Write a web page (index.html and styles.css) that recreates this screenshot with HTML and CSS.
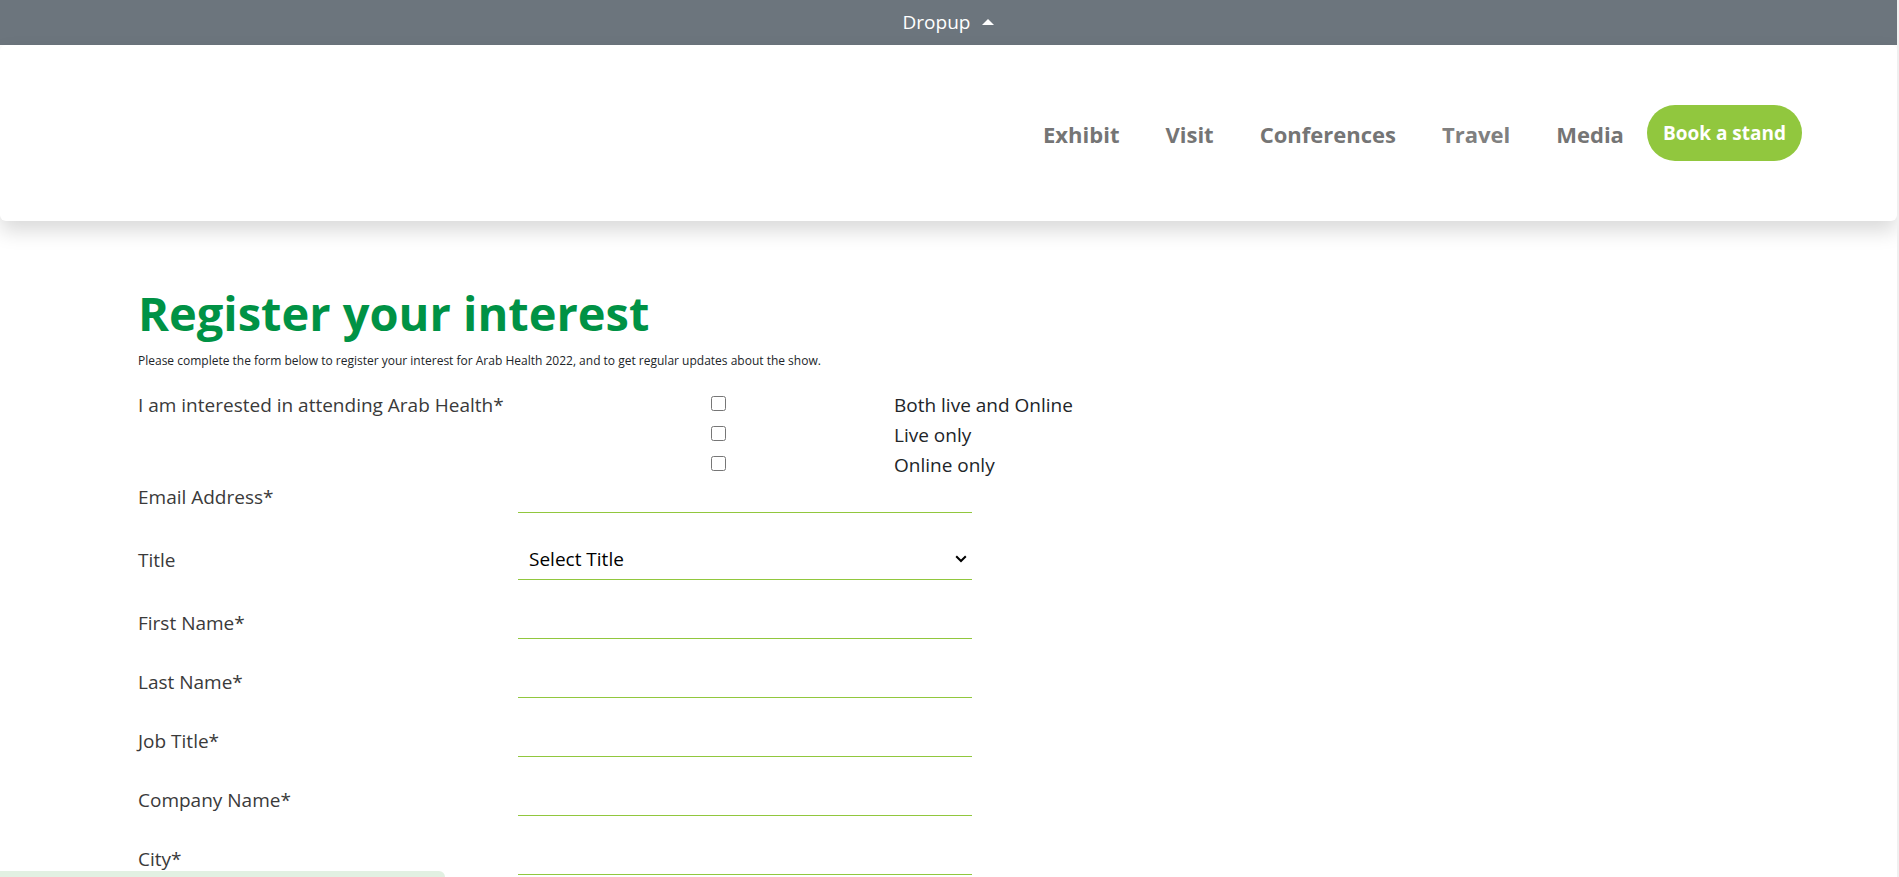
FILE: index.html
```html
<!DOCTYPE html>
<html lang="en">
<head>
<meta charset="utf-8">
<title>Register your interest</title>
<link rel="stylesheet" href="styles.css">
</head>
<body>
<div class="page">
  <div class="topbar">
    <button class="dropup" type="button">Dropup <span class="caret"></span></button>
  </div>
  <header class="header">
    <nav class="nav">
      <a class="nav-link" href="#">Exhibit</a>
      <a class="nav-link" href="#">Visit</a>
      <a class="nav-link" href="#">Conferences</a>
      <a class="nav-link nav-link-light" href="#">Travel</a>
      <a class="nav-link" href="#">Media</a>
    </nav>
    <button class="book" type="button">Book a stand</button>
  </header>
  <main class="main">
    <h1 class="title">Register your interest</h1>
    <p class="intro">Please complete the form below to register your interest for Arab Health 2022, and to get regular updates about the show.</p>
    <form class="form">
      <div class="row interest" role="group" aria-labelledby="interest-label">
        <span class="label" id="interest-label">I am interested in attending Arab Health*</span>
        <div class="options">
          <div class="option"><span class="check"><input class="box" type="checkbox" id="both"></span><label for="both">Both live and Online</label></div>
          <div class="option"><span class="check"><input class="box" type="checkbox" id="live"></span><label for="live">Live only</label></div>
          <div class="option"><span class="check"><input class="box" type="checkbox" id="online"></span><label for="online">Online only</label></div>
        </div>
      </div>
      <div class="fields">
        <div class="row"><label class="label" for="email">Email Address*</label><input class="field" id="email" type="email"></div>
        <div class="row">
          <label class="label" for="honorific">Title</label>
          <div class="select-wrap">
            <select class="field select" id="honorific"><option>Select Title</option></select>
            <svg class="chevron" width="12" height="8" viewBox="0 0 12 8" aria-hidden="true"><path d="M1.2 1.2 6 6l4.800-4.800" fill="none" stroke="#000" stroke-width="2"/></svg>
          </div>
        </div>
        <div class="row"><label class="label" for="first">First Name*</label><input class="field" id="first" type="text"></div>
        <div class="row"><label class="label" for="last">Last Name*</label><input class="field" id="last" type="text"></div>
        <div class="row"><label class="label" for="job">Job Title*</label><input class="field" id="job" type="text"></div>
        <div class="row"><label class="label" for="company">Company Name*</label><input class="field" id="company" type="text"></div>
        <div class="row"><label class="label" for="city">City*</label><input class="field" id="city" type="text"></div>
      </div>
    </form>
  </main>
</div>
<div class="toast"></div>
</body>
</html>
```
FILE: styles.css
```css
* {
  box-sizing: border-box;
}

body {
  margin: 0;
  height: 100vh;
  overflow: hidden;
  background: #fff;
  border-right: 2px solid #f0f0f0;
  color: #212529;
  font-family: "Segoe UI", "Open Sans", "Noto Sans", sans-serif;
  font-size: 19px;
  line-height: 30px;
}

button,
input,
select {
  font: inherit;
}

.page {
  overflow: hidden;
}

.topbar {
  display: flex;
  justify-content: center;
  background: #6c757d;
}

.dropup {
  display: flex;
  align-items: center;
  gap: 12px;
  height: 45px;
  padding: 0 0 2px;
  border: 0;
  background: none;
  color: #fff;
}

.caret {
  border: 6px solid transparent;
  border-top: 0;
  border-bottom-color: #fff;
}

.header {
  display: flex;
  justify-content: flex-end;
  align-items: center;
  gap: 23px;
  height: 176px;
  padding: 0 95px 0 24px;
  border-radius: 6px;
  background: #fff;
  box-shadow: 0 10px 20px rgba(0, 0, 0, 0.15);
}

.nav {
  display: flex;
  gap: 46px;
  padding-top: 2px;
}

.nav-link {
  color: #757575;
  font-size: 22px;
  font-weight: 700;
  text-decoration: none;
}

.nav-link-light {
  color: #808080;
}

.book {
  height: 56px;
  padding: 0 16px;
  border: 0;
  border-radius: 28px;
  background: #91c73e;
  color: #fff;
  font-size: 19px;
  font-weight: 700;
}

.main {
  padding: 60px 138px 0;
}

.title {
  margin: 0;
  color: #009245;
  font-size: 47px;
  font-weight: 700;
  line-height: 64px;
}

.intro {
  margin: 6px 0 19px;
  font-size: 12px;
  line-height: 20px;
}

.row {
  display: grid;
  grid-template-columns: 380fr 454fr 787fr;
  align-items: center;
}

.interest {
  align-items: start;
}

.label {
  color: #3a3a3a;
}

.options {
  grid-column: 2 / 4;
}

.option {
  display: grid;
  grid-template-columns: 376fr 865fr;
}

.check {
  display: flex;
  justify-content: center;
  align-items: center;
  padding: 0 0 3px 25px;
}

.box {
  width: 15px;
  height: 15px;
  margin: 0;
}

.fields {
  display: grid;
  gap: 26px;
}

.field {
  display: block;
  width: 100%;
  height: 33px;
  padding: 0 11px;
  border: 0;
  border-bottom: 1px solid #91c73e;
  border-radius: 0;
  outline: 0;
  background: #fff;
  color: #000;
}

.select-wrap {
  position: relative;
}

.select {
  height: 41px;
  appearance: none;
}

.chevron {
  position: absolute;
  top: 16px;
  right: 5px;
  pointer-events: none;
}

.toast {
  position: fixed;
  bottom: 0;
  left: 0;
  width: 445px;
  height: 6px;
  border-radius: 0 6px 0 0;
  background: #e2f0e2;
}
```
